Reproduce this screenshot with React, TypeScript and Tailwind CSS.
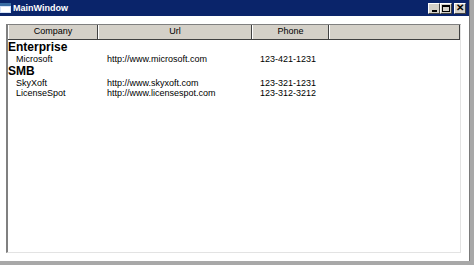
const font = { fontFamily: '"Liberation Sans", Arial, sans-serif' };

const columns = [
  { label: "Company", w: "w-[90px]" },
  { label: "Url", w: "w-[154px]" },
  { label: "Phone", w: "w-[77px]" },
];

const groups = [
  {
    name: "Enterprise",
    rows: [["Microsoft", "http://www.microsoft.com", "123-421-1231"]],
  },
  {
    name: "SMB",
    rows: [
      ["SkyXoft", "http://www.skyxoft.com", "123-321-1231"],
      ["LicenseSpot", "http://www.licensespot.com", "123-312-3212"],
    ],
  },
];

const CaptionButton = ({ children }: { children: React.ReactNode }) => (
  <div className="w-[12px] h-[11px] bg-[#d4d0c8] border border-t-white border-l-white border-r-[#404040] border-b-[#404040] flex items-center justify-center">
    {children}
  </div>
);

export default function App() {
  return (
    <div className="w-[474px] h-[265px] bg-[#a8a8a8] flex overflow-hidden" style={font}>
      <div className="w-[470px] h-[261px] bg-white flex flex-col border-r border-[#7a7a7a]">
        {/* title bar */}
        <div className="h-[16px] bg-[#0a246a] flex items-center pr-[3px]">
          <svg width="11" height="10" viewBox="0 0 11 10" className="ml-[0px]">
            <rect x="0" y="0" width="11" height="10" fill="#d8e4f8" />
            <rect x="0" y="0" width="11" height="3" fill="#3a6ea5" />
            <rect x="1" y="4" width="9" height="5" fill="#ffffff" />
          </svg>
          <span className="ml-[2px] text-white font-bold text-[9px] leading-none">MainWindow</span>
          <div className="ml-auto flex items-center">
            <CaptionButton>
              <div className="w-[5px] h-[2px] bg-black mt-[5px]" />
            </CaptionButton>
            <CaptionButton>
              <div className="w-[8px] h-[7px] border border-black border-t-2" />
            </CaptionButton>
            <div className="w-[2px]" />
            <CaptionButton>
              <span className="text-[10px] font-bold leading-none text-black">✕</span>
            </CaptionButton>
          </div>
        </div>

        {/* list view */}
        <div className="flex-1 pt-[8px] pl-[6px] pr-[8px] pb-[8px] flex">
          <div className="flex-1 flex flex-col border-l-2 border-t border-l-[#808080] border-t-[#808080] border-r border-b border-r-[#e3e3e3] border-b-[#e3e3e3]">
            <div className="flex h-[15px] bg-[#d4d0c8] border-b border-[#404040]">
              {columns.map((c) => (
                <div
                  key={c.label}
                  className={`${c.w} border-r border-[#404040] border-l border-l-white flex items-center justify-center text-[9px] text-black`}
                >
                  {c.label}
                </div>
              ))}
              <div className="flex-1 border-r border-[#404040] border-l border-l-white" />
            </div>
            <div className="flex flex-col">
              {groups.map((g) => (
                <div key={g.name} className="flex flex-col">
                  <div className="h-[14px] flex items-center text-[12px] font-bold text-black leading-none">
                    {g.name}
                  </div>
                  {g.rows.map((r) => (
                    <div key={r[0]} className="h-[10px] flex items-center text-[9px] text-black leading-none">
                      <div className="w-[90px] pl-[8px]">{r[0]}</div>
                      <div className="w-[154px] pl-[9px]">{r[1]}</div>
                      <div className="w-[77px] pl-[8px]">{r[2]}</div>
                    </div>
                  ))}
                </div>
              ))}
            </div>
          </div>
        </div>
      </div>
    </div>
  );
}
